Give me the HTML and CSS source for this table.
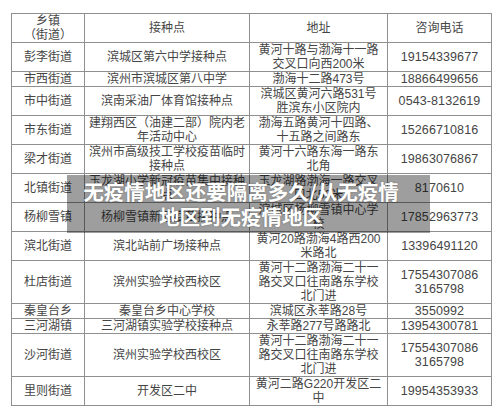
FILE: index.html
```html
<!DOCTYPE html>
<html lang="zh">
<head>
<meta charset="utf-8">
<link rel="stylesheet" href="styles.css">
</head>
<body>
<div class="page">
  <table class="sheet">
    <colgroup>
      <col class="c1"><col class="c2"><col class="c3"><col class="c4">
    </colgroup>
    <tr><td>乡镇<br>（街道）</td><td>接种点</td><td>地址</td><td>咨询电话</td></tr>
    <tr><td>彭李街道</td><td class="wide">滨城区第六中学接种点</td><td>黄河十路与渤海十一路交叉口向西200米</td><td class="num">19154339677</td></tr>
    <tr><td>市西街道</td><td class="wide">滨州市滨城区第八中学</td><td>渤海十二路473号</td><td class="num">18866499656</td></tr>
    <tr><td>市中街道</td><td class="wide">滨南采油厂体育馆接种点</td><td>滨城区黄河六路531号胜滨东小区院内</td><td class="num">0543-8132619</td></tr>
    <tr><td>市东街道</td><td class="wide">建翔西区（油建二部）院内老年活动中心</td><td>渤海五路黄河十四路、十五路之间路东</td><td class="num">15266710816</td></tr>
    <tr><td>梁才街道</td><td class="wide">滨州市高级技工学校疫苗临时接种点</td><td>黄河十六路东海一路东北角</td><td class="num">19863076867</td></tr>
    <tr><td>北镇街道</td><td class="wide">玉龙湖小学新冠疫苗集中接种点</td><td>玉龙湖路渤海一路交叉口北50米</td><td class="num">8170610</td></tr>
    <tr><td>杨柳雪镇</td><td class="wide">杨柳雪镇新冠疫苗接种点</td><td>滨城区杨柳雪镇中心学校</td><td class="num">17852963773</td></tr>
    <tr><td>滨北街道</td><td class="wide">滨北站前广场接种点</td><td>黄河20路渤海4路西200米路北</td><td class="num">13396491120</td></tr>
    <tr><td>杜店街道</td><td class="wide">滨州实验学校西校区</td><td>黄河十二路渤海二十一路交叉口往南路东学校北门进</td><td class="num">17554307086<br>3165798</td></tr>
    <tr><td>秦皇台乡</td><td class="wide">秦皇台乡中心学校</td><td>滨城区永莘路28号</td><td class="num">3550992</td></tr>
    <tr><td>三河湖镇</td><td class="wide">三河湖镇实验学校接种点</td><td>永莘路277号路路北</td><td class="num">13954300781</td></tr>
    <tr><td>沙河街道</td><td class="wide">滨州实验学校西校区</td><td>黄河十二路渤海二十一路交叉口往南路东学校北门进</td><td class="num">17554307086<br>3165798</td></tr>
    <tr><td>里则街道</td><td class="wide">开发区二中</td><td>黄河二路G220开发区二中</td><td class="num">19954353933</td></tr>
  </table>
  <div class="banner">
    <span class="line">无疫情地区还要隔离多久/从无疫情</span>
    <span class="line">地区到无疫情地区</span>
  </div>
</div>
</body>
</html>
```
FILE: styles.css
```css
html, body {
  margin: 0;
  padding: 0;
  background: #ffffff;
}
.page {
  position: relative;
  width: 500px;
  height: 414px;
  padding: 13px 0 0 11px;
  box-sizing: border-box;
  font-family: "Liberation Sans", "Noto Sans CJK SC", sans-serif;
}
.sheet {
  border-collapse: collapse;
  table-layout: fixed;
  width: 480px;
  color: #454545;
  font-size: 12px;
  line-height: 14px;
}
.c1 { width: 73px; }
.c2 { width: 165px; }
.c3 { width: 138px; }
.c4 { width: 104px; }
.sheet td {
  border: 1px solid #8f8f8f;
  padding: 0 5px;
  text-align: center;
  vertical-align: middle;
  word-break: break-all;
}
.sheet td.wide {
  padding: 0 2px;
}
.sheet td.num {
  font-size: 12.5px;
  letter-spacing: 0.1px;
}
.banner {
  position: absolute;
  left: 67px;
  top: 175px;
  width: 363px;
  height: 58px;
  padding-right: 15px;
  box-sizing: border-box;
  background: rgba(0, 0, 0, 0.38);
  display: flex;
  flex-direction: column;
  align-items: center;
  justify-content: center;
  color: #ffffff;
  font-family: "Noto Sans CJK SC", sans-serif;
  font-weight: 700;
  font-size: 20.5px;
  line-height: 25px;
  text-shadow: 0 0 2px rgba(0,0,0,0.3);
}
.line {
  display: block;
  white-space: nowrap;
}
```
